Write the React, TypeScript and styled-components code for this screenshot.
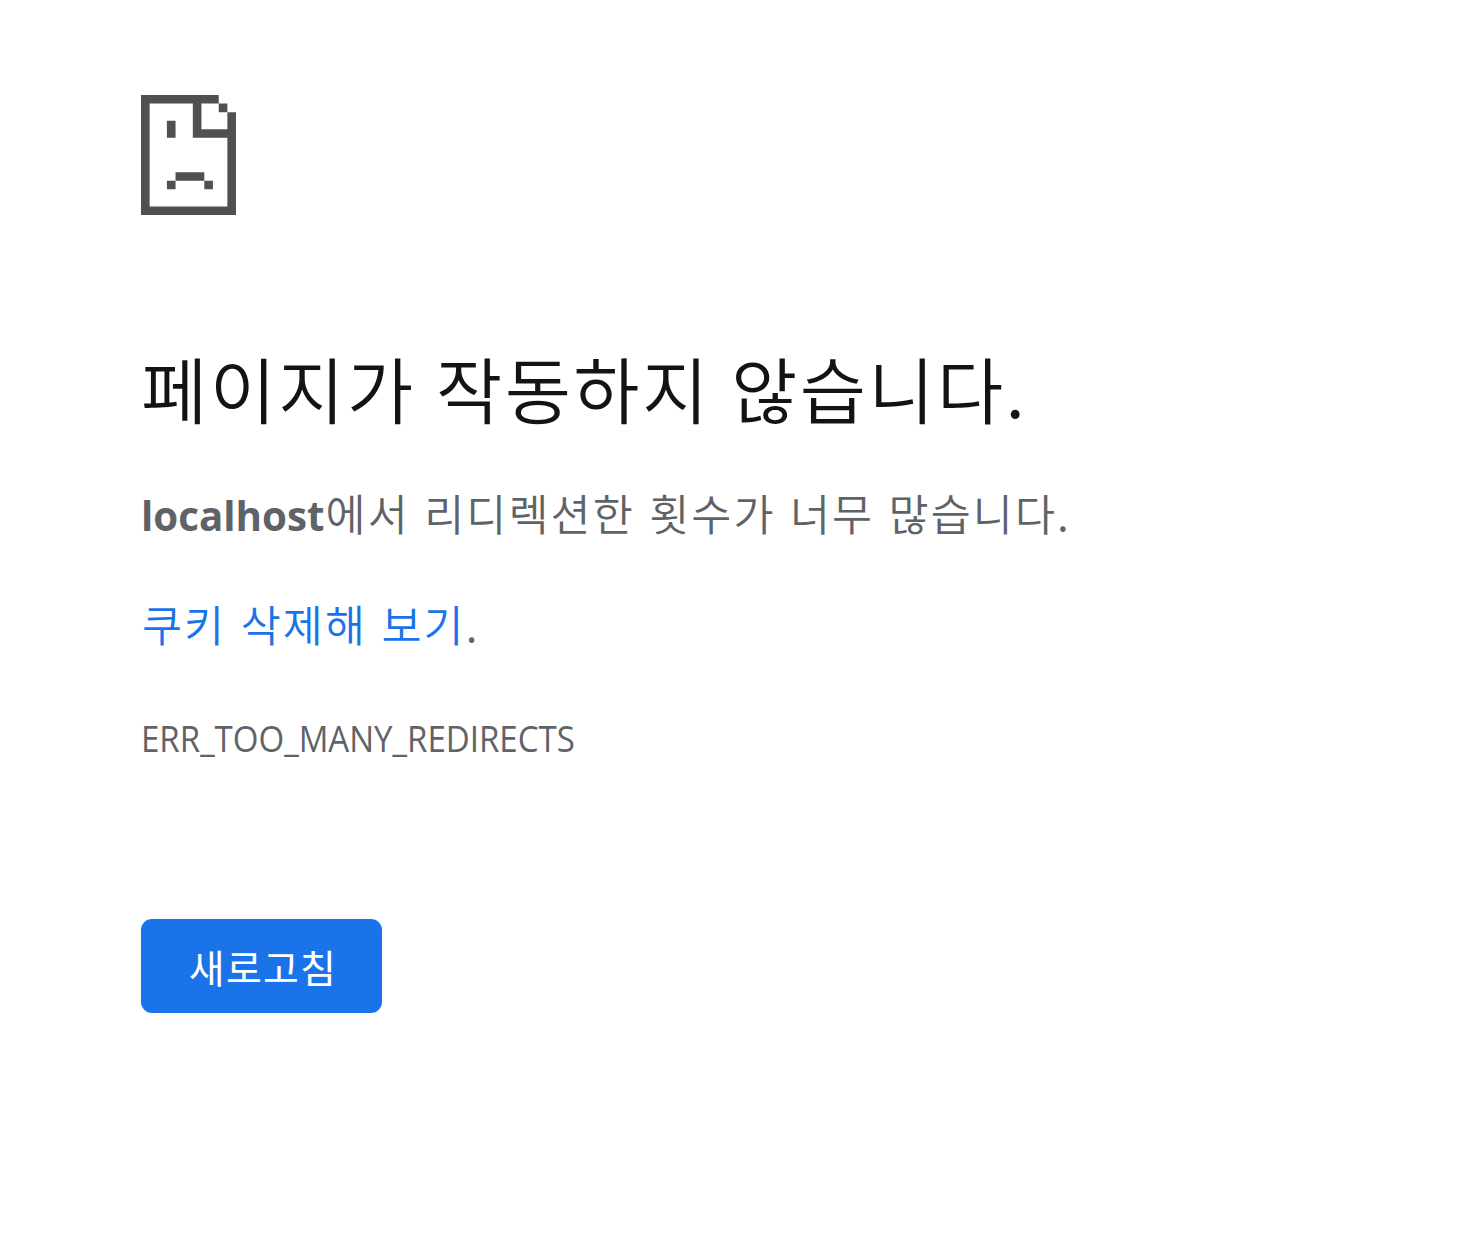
import React from "react"
import styled, { createGlobalStyle } from "styled-components"

const hangul = `"Noto Sans CJK KR", sans-serif`
const latin = `"Open Sans", "Noto Sans CJK KR", sans-serif`

const SadPageIcon: React.FC = () => (
  <S.Icon viewBox="0 0 11 14" preserveAspectRatio="none" aria-hidden="true">
    <path d="M0 0H9V1H7V4H10V2H11V14H0ZM1 1V13H10V5H6V1Z" fillRule="evenodd" />
    <path d="M9 1H10V2H9ZM3 3H4V5H3ZM4 9H7.33V10H4ZM3 10H4V11H3ZM7.33 10H8.33V11H7.33Z" />
  </S.Icon>
)

const App: React.FC = () => (
  <>
    <GlobalStyle />
    <S.Page>
      <SadPageIcon />
      <S.Title>페이지가 작동하지 않습니다.</S.Title>
      <S.Summary>
        <S.Host>localhost</S.Host>에서 리디렉션한 횟수가 너무 많습니다.
      </S.Summary>
      <S.Suggestion>
        <S.Link href="#">쿠키 삭제해 보기</S.Link>.
      </S.Suggestion>
      <S.ErrorCode>ERR_TOO_MANY_REDIRECTS</S.ErrorCode>
      <S.ReloadButton type="button">새로고침</S.ReloadButton>
    </S.Page>
  </>
)

const GlobalStyle = createGlobalStyle`
  body {
    margin: 0;
    background-color: #fff;
  }
`

const S = {
  Page: styled.main`
    display: flex;
    flex-direction: column;
    align-items: flex-start;
    box-sizing: border-box;
    height: 1256px;
    padding: 95px 0 0 141px;
    color: #5f6368;
    font-family: ${hangul};
    font-weight: 350;
    white-space: nowrap;
  `,
  Icon: styled.svg`
    display: block;
    width: 95px;
    height: 120px;
    fill: #505050;
  `,
  Title: styled.h1`
    margin: 122px 0 0;
    color: #121316;
    font-size: 72px;
    font-weight: 350;
    line-height: 100px;
    letter-spacing: 2.4px;
    word-spacing: 2px;
  `,
  Summary: styled.p`
    margin: 46px 0 0;
    font-size: 43.5px;
    line-height: 60px;
    letter-spacing: 2.1px;
    word-spacing: 2.6px;
  `,
  Host: styled.strong`
    margin-right: 1px;
    font-family: ${latin};
    font-size: 40.3px;
    font-weight: 700;
    letter-spacing: 0;
  `,
  Suggestion: styled.p`
    margin: 48px 0 0 1px;
    font-size: 43.5px;
    line-height: 60px;
    letter-spacing: 2.1px;
    word-spacing: 2.6px;
  `,
  Link: styled.a`
    color: #1a73e8;
    text-decoration: none;
  `,
  ErrorCode: styled.div`
    margin-top: 54px;
    font-family: ${latin};
    font-size: 36.5px;
    font-weight: 400;
    line-height: 60px;
    transform: scaleX(0.905);
    transform-origin: left;
  `,
  ReloadButton: styled.button`
    width: 241px;
    height: 94px;
    margin-top: 150.5px;
    padding: 0 0 0 3px;
    border: 0;
    border-radius: 11px;
    background-color: #1a73e8;
    color: #fff;
    font-family: ${hangul};
    font-size: 39px;
    font-weight: 400;
    line-height: 92px;
    letter-spacing: 1.2px;
  `,
}

export default App
